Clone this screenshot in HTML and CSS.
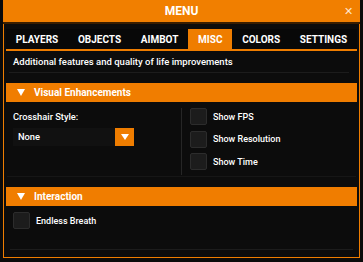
FILE: index.html
```html
<!DOCTYPE html>
<html lang="en">
<head>
  <meta charset="UTF-8" />
  <meta name="viewport" content="width=device-width, initial-scale=1.0"/>
  <title>Menu</title>
  <link rel="stylesheet" href="styles.css">
</head>
<body>
  <div class="window">
    <div class="titlebar">
      <span class="title">MENU</span>
      <span class="close">&#x2715;</span>
    </div>

    <div class="tabs">
      <div class="tab">PLAYERS</div>
      <div class="tab">OBJECTS</div>
      <div class="tab">AIMBOT</div>
      <div class="tab active">MISC</div>
      <div class="tab">COLORS</div>
      <div class="tab">SETTINGS</div>
    </div>

    <div class="desc">Additional features and quality of life improvements</div>

    <div class="section-head"><span class="arrow"></span>Visual Enhancements</div>
    <div class="section-body cols">
      <div class="col left">
        <div class="label">Crosshair Style:</div>
        <div class="select">
          <span class="value">None</span>
          <span class="drop"><span class="tri"></span></span>
        </div>
      </div>
      <div class="col right">
        <div class="check"><span class="box"></span>Show FPS</div>
        <div class="check"><span class="box"></span>Show Resolution</div>
        <div class="check"><span class="box"></span>Show Time</div>
      </div>
    </div>

    <div class="section-head"><span class="arrow"></span>Interaction</div>
    <div class="section-body single">
      <div class="check"><span class="box"></span>Endless Breath</div>
    </div>
  </div>
</body>
</html>
```

FILE: styles.css
```css
body {
  margin: 0;
  background-color: #0a0a0a;
  color: #fff;
  font-family: Roboto, 'Liberation Sans', sans-serif;
  font-weight: 500;
}
.window {
  box-sizing: border-box;
  margin-left: 3px;
  width: 357px;
  height: 258px;
  border: 1px solid #ef7d00;
  border-top: none;
  background-color: #0c0c0c;
}
.titlebar {
  position: relative;
  height: 22px;
  margin: 0 -1px;
  background-color: #f17f00;
  border-bottom: 2px solid #3a1e00;
  text-align: center;
  line-height: 23px;
  font-size: 12px;
  font-weight: 700;
}
.close {
  position: absolute;
  right: 7px;
  top: 0;
  font-size: 11px;
  font-weight: 400;
  color: #ffe6cc;
}
.tabs {
  display: flex;
  margin: 5px 2px 0;
  border-bottom: 2px solid #ef7d00;
  background-color: #080808;
}
.tab {
  flex: auto;
  text-align: center;
  padding: 0 8px;
  height: 20px;
  line-height: 21px;
  font-size: 10px;
  font-weight: 700;
}
.tab.active {
  background-color: #ef7d00;
}
.desc {
  margin: 0 10px 0 5px;
  padding: 0 0 0 4px;
  height: 21px;
  line-height: 22px;
  font-size: 9.5px;
  border-bottom: 1px solid #1c1c1c;
}
.section-head {
  display: flex;
  align-items: center;
  margin: 10px 2px 0;
  height: 19px;
  background-color: #f07d00;
  font-size: 10px;
  font-weight: 700;
}
.arrow {
  width: 0;
  height: 0;
  margin: 0 9px 0 11px;
  border-left: 4px solid transparent;
  border-right: 4px solid transparent;
  border-top: 7px solid #fff;
}
.section-body {
  margin: 0 3px;
}
.cols {
  display: flex;
  height: 74px;
  border-bottom: 1px solid #161616;
}
.col.left {
  width: 168px;
  padding: 3px 0 0 6px;
  border-right: 1px solid #262626;
  margin: 6px 0 1px;
}
.label {
  font-size: 9.3px;
  margin-bottom: 6px;
}
.select {
  display: flex;
  width: 121px;
  height: 18px;
  background-color: #111;
}
.value {
  flex: 1;
  padding-left: 5px;
  line-height: 18px;
  font-size: 9.3px;
}
.drop {
  display: flex;
  align-items: center;
  justify-content: center;
  width: 19px;
  background-color: #ef7d00;
}
.tri {
  width: 0;
  height: 0;
  border-left: 4px solid transparent;
  border-right: 4px solid transparent;
  border-top: 6px solid #fff;
}
.col.right {
  display: flex;
  flex-direction: column;
  gap: 5.5px;
  padding: 6px 0 0 8px;
}
.check {
  display: flex;
  align-items: center;
  height: 17px;
  font-size: 9px;
}
.box {
  box-sizing: border-box;
  width: 17px;
  height: 17px;
  margin-right: 6px;
  background-color: #1c1c1c;
  border: 1px solid #2c2c2c;
  border-radius: 2px;
}
.single {
  margin: 0 6px;
  padding: 6px 0 0 3px;
  height: 37px;
  border-bottom: 1px solid #1c1c1c;
}
```
